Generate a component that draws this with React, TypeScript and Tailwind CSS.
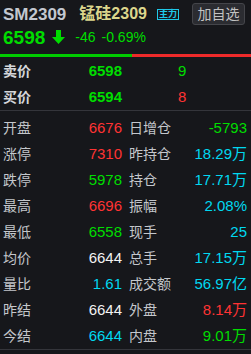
import React from "react";

const G = "text-[#00dd00]";
const R = "text-[#ff3333]";
const C = "text-[#00d8f0]";
const W = "text-[#f2f2f2]";

const rows: [string, string, string, string, string, string][] = [
  ["开盘", "6676", R, "日增仓", "-5793", G],
  ["涨停", "7310", R, "昨持仓", "18.29万", C],
  ["跌停", "5978", G, "持仓", "17.71万", C],
  ["最高", "6696", R, "振幅", "2.08%", C],
  ["最低", "6558", G, "现手", "25", C],
  ["均价", "6644", W, "总手", "17.15万", C],
  ["量比", "1.61", C, "成交额", "56.97亿", C],
  ["昨结", "6644", W, "外盘", "8.14万", R],
  ["今结", "6644", C, "内盘", "9.01万", G],
];

export default function App() {
  return (
    <div
      className="w-[251px] h-[354px] bg-[#16171b] overflow-hidden"
      style={{ fontFamily: '"Liberation Sans", "Noto Sans CJK SC", sans-serif' }}
    >
      <div className="h-[28px] flex items-center pl-[3px] pr-[6px]">
        <span className="text-[17px] font-bold text-[#c3c7cf] leading-none">SM2309</span>
        <span className="ml-[13px] text-[16px] font-bold text-[#dcd68c] leading-none">锰硅2309</span>
        <span className="ml-[10px] border border-[#1fc8e8] text-[#1fc8e8] text-[9px] leading-[9px] px-[1px] py-[0px] font-bold">主力</span>
        <div className="ml-auto h-[22px] w-[53px] flex items-center justify-center rounded-[3px] bg-[#2b2c31] border border-[#44454a] text-[14px] text-[#c2c2c2]">
          加自选
        </div>
      </div>
      <div className="h-[18px] flex items-center pl-[3px]">
        <span className="text-[19px] font-bold text-[#00dd00] leading-none">6598</span>
        <svg className="ml-[7px]" width="13" height="14" viewBox="0 0 13 14">
          <path d="M4 0 H9 V7 H13 L6.5 14 L0 7 H4 Z" fill="#00dd00" />
        </svg>
        <span className="ml-[10px] text-[14px] text-[#00dd00] leading-none">-46</span>
        <span className="ml-[6px] text-[14px] text-[#00dd00] leading-none">-0.69%</span>
      </div>
      <div className="mt-[8px] h-[3px] flex">
        <div className="w-[132px] bg-[#00cc00]" />
        <div className="flex-1 bg-[#ee2a2a]" />
      </div>
      <div className="pt-[1px] border-b border-[#34353b]">
        {[
          ["卖价", "6598", "9", R.replace("", "") && "text-[#00dd00]"],
          ["买价", "6594", "8", "text-[#ff3333]"],
        ].map(([l, v, n, nc]) => (
          <div key={l} className="h-[26px] flex items-center pl-[3px]">
            <span className="w-[84px] text-[14px] font-bold text-[#d4d6da]">{l}</span>
            <span className="w-[35px] text-right text-[15px] font-bold text-[#00dd00]">{v}</span>
            <span className={`ml-[56px] text-[15px] ${nc}`}>{n}</span>
          </div>
        ))}
      </div>
      <div className="pt-[4px] border-b border-[#34353b]">
        {rows.map(([l1, v1, c1, l2, v2, c2]) => (
          <div key={l1} className="h-[26px] flex items-center">
            <div className="w-[125px] flex items-center justify-between pl-[3px] pr-[3px]">
              <span className="text-[14px] text-[#c4c7cc]">{l1}</span>
              <span className={`text-[15px] ${c1}`}>{v1}</span>
            </div>
            <div className="w-[126px] flex items-center justify-between pl-[4px] pr-[4px]">
              <span className="text-[14px] text-[#c4c7cc]">{l2}</span>
              <span className={`text-[15px] ${c2}`}>{v2}</span>
            </div>
          </div>
        ))}
      </div>
    </div>
  );
}
